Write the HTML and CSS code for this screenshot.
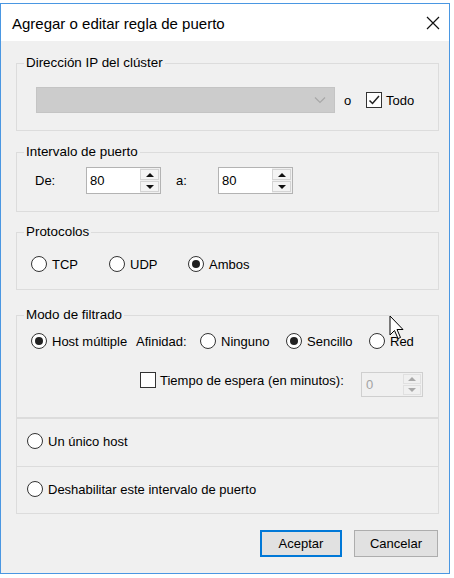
FILE: index.html
```html
<!DOCTYPE html>
<html lang="es">
<head>
<meta charset="utf-8">
<title>Agregar o editar regla de puerto</title>
<link rel="stylesheet" href="styles.css">
</head>
<body>
<div class="dialog">
  <div class="titlebar">
    <span class="title">Agregar o editar regla de puerto</span>
    <svg class="close" width="14" height="14" viewBox="0 0 14 14"><path d="M1 1L13 13M13 1L1 13" stroke="#111" stroke-width="1.2" fill="none"/></svg>
  </div>
  <div class="client">
    <fieldset class="grp">
      <legend>Dirección IP del clúster</legend>
      <div class="gb g-ip">
        <div class="row">
          <div class="combo">
            <svg class="chev" width="12" height="8" viewBox="0 0 12 8"><path d="M1 1.5L6 6.5L11 1.5" stroke="#a8a8a8" stroke-width="1.2" fill="none"/></svg>
          </div>
          <span class="or">o</span>
          <span class="chk"><span class="box"><svg width="14" height="14" viewBox="0 0 14 14"><path d="M2.5 7.5L5.5 10.5L12 3" stroke="#222" stroke-width="1.5" fill="none"/></svg></span>Todo</span>
        </div>
      </div>
    </fieldset>

    <fieldset class="grp m-port">
      <legend>Intervalo de puerto</legend>
      <div class="gb g-port">
        <div class="row">
          <span class="lbl-de">De:</span>
          <div class="spin">
            <span class="val">80</span>
            <span class="btns"><span class="sb"><i class="up"></i></span><span class="sb"><i class="down"></i></span></span>
          </div>
          <span class="lbl-a">a:</span>
          <div class="spin">
            <span class="val">80</span>
            <span class="btns"><span class="sb"><i class="up"></i></span><span class="sb"><i class="down"></i></span></span>
          </div>
        </div>
      </div>
    </fieldset>

    <fieldset class="grp m-proto">
      <legend>Protocolos</legend>
      <div class="gb g-proto">
        <div class="row">
          <span class="radio w-tcp"><span class="dot"></span>TCP</span>
          <span class="radio w-udp"><span class="dot"></span>UDP</span>
          <span class="radio"><span class="dot on"></span>Ambos</span>
        </div>
      </div>
    </fieldset>

    <fieldset class="grp m-filter">
      <legend>Modo de filtrado</legend>
      <div class="gb g-filter">
        <div class="row">
          <span class="radio w-host"><span class="dot on"></span>Host múltiple</span>
          <span class="w-af">Afinidad:</span>
          <span class="radio w-nin"><span class="dot"></span>Ninguno</span>
          <span class="radio w-sen"><span class="dot on"></span>Sencillo</span>
          <span class="radio"><span class="dot"></span>Red</span>
        </div>
        <div class="row row2">
          <span class="chk w-time"><span class="box"></span>Tiempo de espera (en minutos):</span>
          <div class="spin dis">
            <span class="val">0</span>
            <span class="btns"><span class="sb"><i class="up"></i></span><span class="sb"><i class="down"></i></span></span>
          </div>
        </div>
      </div>
    </fieldset>

    <div class="modes">
      <div class="mode"><span class="radio"><span class="dot"></span>Un único host</span></div>
      <div class="mode"><span class="radio"><span class="dot"></span>Deshabilitar este intervalo de puerto</span></div>
    </div>

    <div class="buttons">
      <span class="btn default">Aceptar</span>
      <span class="btn">Cancelar</span>
    </div>
  </div>
</div>
<svg class="cursor" width="16" height="26" viewBox="0 0 16 26"><path d="M1 1L1 20L5.5 15.5L9 23.5L11.5 22.5L8 14.5L14 14.5Z" fill="#fff" stroke="#000" stroke-width="1" stroke-linejoin="round"/></svg>
</body>
</html>
```
FILE: styles.css
```css
* { box-sizing: border-box; }
html, body { margin: 0; padding: 0; }
body {
  width: 454px;
  height: 578px;
  overflow: hidden;
  position: relative;
  background: #fff;
  font-family: "Liberation Sans", Arial, sans-serif;
  font-size: 13px;
  color: #000;
}
.dialog {
  margin-top: 3px;
  width: 450px;
  height: 571px;
  border: 1px solid #4a97e2;
  background: #f0f0f0;
  display: flex;
  flex-direction: column;
}
.titlebar {
  height: 37px;
  background: #fff;
  display: flex;
  align-items: center;
  padding-left: 11px;
  padding-right: 8px;
  flex: none;
}
.title { font-size: 15px; flex: 1; padding-top: 1px; }
.close { margin-right: 1px; }
.client {
  flex: 1;
  padding: 14px 10px 0 15px;
}
.grp {
  margin: 0;
  border: 1px solid #dcdcdc;
  padding: 0;
  min-width: 0;
}
.grp legend {
  margin-left: 7px;
  padding: 0 2px;
  line-height: 16px;
  height: 16px;
  font-size: 13.4px;
}
.row { display: flex; align-items: center; }

/* IP group */
.g-ip { padding: 16px 0 17px 19px; }
.combo {
  width: 299px;
  height: 26px;
  background: #cccccc;
  border: 1px solid #c4c4c4;
  display: flex;
  align-items: center;
  justify-content: flex-end;
  padding-right: 8px;
}
.or { margin-left: 9px; width: 22px; }
.chk { display: flex; align-items: center; }
.box {
  width: 16px;
  height: 16px;
  border: 1px solid #333;
  background: #fff;
  margin-right: 4px;
  display: flex;
  align-items: center;
  justify-content: center;
}

/* Port group */
.m-port { margin-top: 13px; }
.g-port { padding: 7px 0 17px 18px; }
.lbl-de { width: 51px; }
.lbl-a { width: 42px; margin-left: 15px; }
.spin {
  width: 75px;
  height: 27px;
  border: 1px solid #b3b3b3;
  background: #fff;
  display: flex;
}
.spin .val { flex: 1; padding-left: 3px; line-height: 25px; }
.spin .btns {
  width: 20px;
  display: flex;
  flex-direction: column;
  background: #f0f0f0;
  padding: 1px 1px 1px 0;
  gap: 1px;
}
.sb {
  flex: 1;
  background: #f4f4f4;
  border: 1px solid #d4d4d4;
  display: flex;
  align-items: center;
  justify-content: center;
}
.up, .down { width: 0; height: 0; border-left: 4px solid transparent; border-right: 4px solid transparent; }
.up { border-bottom: 4px solid #111; }
.down { border-top: 4px solid #111; }
.spin.dis { width: 62px; height: 25px; border-color: #cfcfcf; background: #f0f0f0; margin-left: 16px; }
.spin.dis .val { color: #a3a3a3; line-height: 23px; padding-left: 4px; }
.spin.dis .btns { width: 19px; }
.spin.dis .sb { background: #f0f0f0; border-color: #e0e0e0; }
.spin.dis .up { border-bottom-color: #a8a8a8; }
.spin.dis .down { border-top-color: #a8a8a8; }

/* radios */
.radio { display: flex; align-items: center; height: 16px; }
.dot {
  width: 16px;
  height: 16px;
  border: 1px solid #333;
  border-radius: 50%;
  background: #fff;
  margin-right: 5px;
  display: flex;
  align-items: center;
  justify-content: center;
  flex: none;
}
.dot.on::after {
  content: "";
  width: 8px;
  height: 8px;
  border-radius: 50%;
  background: #222;
}

/* Protocols */
.m-proto { margin-top: 12px; }
.g-proto { padding: 16px 0 17px 14px; }
.w-tcp { width: 78px; }
.w-udp { width: 79px; }

/* Filter */
.m-filter { margin-top: 17px; }
.g-filter { padding: 10px 0 20px 14px; }
.w-host { width: 105px; }
.w-af { width: 64px; }
.w-nin { width: 86px; }
.w-sen { width: 83px; }
.row2 { margin-top: 23px; align-items: flex-start; }
.w-time { margin-left: 109px; width: 205px; height: 16px; }

.modes { border: 1px solid #dcdcdc; }
.mode { padding: 14px 0 17px 10px; }
.mode + .mode { border-top: 1px solid #dcdcdc; padding-bottom: 16px; }

.buttons {
  margin-top: 16px;
  display: flex;
  justify-content: flex-end;
  gap: 12px;
  padding-right: 1px;
}
.btn {
  height: 27px;
  background: #e1e1e1;
  border: 1px solid #adadad;
  display: flex;
  align-items: center;
  justify-content: center;
}
.btn.default { width: 82px; border: 2px solid #0078d7; }
.btn:last-child { width: 84px; }

.cursor { position: absolute; left: 389px; top: 315px; }
```
